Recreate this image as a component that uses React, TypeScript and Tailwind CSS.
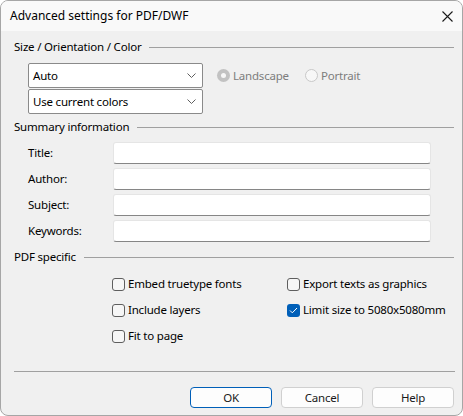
import React from 'react';

const font = { fontFamily: '"Noto Sans", "Open Sans", sans-serif' };

function Chevron() {
  return (
    <svg width="9" height="5" viewBox="0 0 9 5" className="text-[#5f5f5f]">
      <path d="M0.5 0.5 L4.5 4.5 L8.5 0.5" fill="none" stroke="currentColor" strokeWidth="1" />
    </svg>
  );
}

function Combo({ label }: { label: string }) {
  return (
    <div className="flex h-[25px] w-[175px] items-center justify-between rounded-[2px] border border-[#8a8a8a] bg-white pl-[4px] pr-[6px] text-black">
      <span>{label}</span>
      <Chevron />
    </div>
  );
}

function GroupHeader({ title }: { title: string }) {
  return (
    <div className="flex h-[16px] items-center gap-[8px] pr-[8px] text-black">
      <span className="whitespace-nowrap">{title}</span>
      <div className="h-0 flex-1 border-t border-[#a0a0a0]" />
    </div>
  );
}

function Radio({ label, checked }: { label: string; checked?: boolean }) {
  return (
    <div className="flex items-center gap-[3px] text-[#7d7d7d]">
      {checked ? (
        <span className="flex h-[13px] w-[13px] items-center justify-center rounded-full bg-[#c2c2c2]">
          <span className="h-[5px] w-[5px] rounded-full bg-[#f7f7f7]" />
        </span>
      ) : (
        <span className="h-[13px] w-[13px] rounded-full border border-[#c8c8c8] bg-[#f7f7f7]" />
      )}
      <span>{label}</span>
    </div>
  );
}

function Field({ label }: { label: string }) {
  return (
    <div className="flex h-[22px] items-center">
      <span className="w-[85px] text-black">{label}</span>
      <div className="h-[22px] w-[318px] rounded-[3px] border border-[#e5e5e5] border-b-[#868686] bg-white" />
    </div>
  );
}

function Check({ label, checked }: { label: string; checked?: boolean }) {
  return (
    <div className="flex h-[20px] items-center gap-[3px] text-black">
      {checked ? (
        <span className="flex h-[13px] w-[13px] items-center justify-center rounded-[3px] bg-[#005fb8]">
          <svg width="9" height="7" viewBox="0 0 9 7">
            <path d="M1 3.5 L3.3 5.8 L8 1" fill="none" stroke="white" strokeWidth="1" />
          </svg>
        </span>
      ) : (
        <span className="h-[13px] w-[13px] rounded-[3px] border border-[#5e5e5e] bg-[#f6f6f6]" />
      )}
      <span className="whitespace-nowrap">{label}</span>
    </div>
  );
}

function Button({ label, primary }: { label: string; primary?: boolean }) {
  return (
    <div
      className={`flex h-[21px] w-[82px] items-center justify-center rounded-[4px] border bg-[#fdfdfd] text-[#1a1a1a] ${
        primary ? 'border-[#005fb8]' : 'border-[#d0d0d0]'
      }`}
    >
      {label}
    </div>
  );
}

export default function App() {
  return (
    <div className="h-[416px] w-[463px] bg-white text-[11.5px] tracking-[-0.2px]" style={font}>
      <div className="flex h-[416px] w-[463px] flex-col overflow-hidden rounded-[8px] border border-[#a6a6a6] bg-[#f0f0f0]">
        {/* Title bar */}
        <div className="flex h-[30px] shrink-0 items-center justify-between bg-[#f9f9f9] pl-[9px] pr-[9px] text-[12px] tracking-normal text-black">
          <span>Advanced settings for PDF/DWF</span>
          <svg width="11" height="11" viewBox="0 0 11 11">
            <path d="M0.5 0.5 L10.5 10.5 M10.5 0.5 L0.5 10.5" stroke="#1a1a1a" strokeWidth="1.1" />
          </svg>
        </div>

        <div className="flex flex-1 flex-col pl-[13px]">
          <div className="mt-[8px]">
            <GroupHeader title="Size / Orientation / Color" />
          </div>
          <div className="ml-[14px] mt-[8px] flex flex-col gap-[1px]">
            <div className="flex items-center gap-[14px]">
              <Combo label="Auto" />
              <div className="flex items-center gap-[16px]">
                <Radio label="Landscape" checked />
                <Radio label="Portrait" />
              </div>
            </div>
            <Combo label="Use current colors" />
          </div>

          <div className="mt-[5px]">
            <GroupHeader title="Summary information" />
          </div>
          <div className="ml-[14px] mt-[7px] flex flex-col gap-[4px]">
            <Field label="Title:" />
            <Field label="Author:" />
            <Field label="Subject:" />
            <Field label="Keywords:" />
          </div>

          <div className="mt-[7px]">
            <GroupHeader title="PDF specific" />
          </div>
          <div className="ml-[98px] mt-[9px] grid grid-cols-[175px_1fr] gap-y-[6px]">
            <Check label="Embed truetype fonts" />
            <Check label="Export texts as graphics" />
            <Check label="Include layers" />
            <Check label="Limit size to 5080x5080mm" checked />
            <Check label="Fit to page" />
          </div>

          <div className="mr-[7px] mt-[25px] border-t border-[#a0a0a0]" />

          <div className="mr-[8px] mt-[15px] flex justify-end gap-[9px]">
            <Button label="OK" primary />
            <Button label="Cancel" />
            <Button label="Help" />
          </div>
        </div>
      </div>
    </div>
  );
}
